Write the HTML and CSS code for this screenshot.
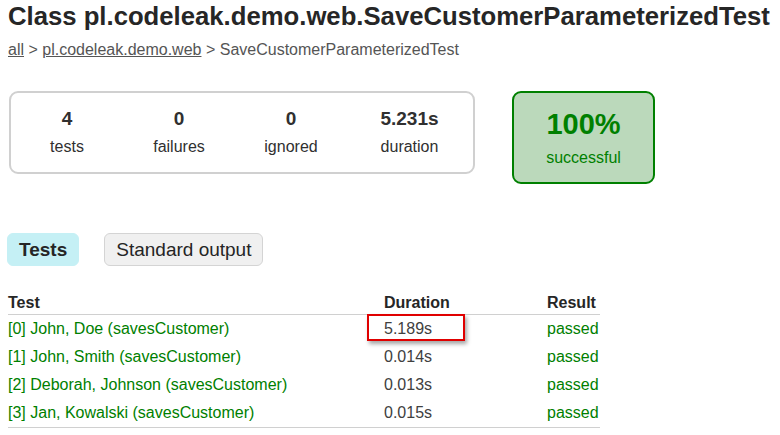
FILE: index.html
```html
<!DOCTYPE html>
<html>
<head>
<meta charset="utf-8">
<link rel="stylesheet" href="styles.css">
</head>
<body>
<div class="content">
  <h1 class="title">Class pl.codeleak.demo.web.SaveCustomerParameterizedTest</h1>
  <div class="breadcrumbs"><a href="#">all</a> &gt; <a href="#">pl.codeleak.demo.web</a> &gt; SaveCustomerParameterizedTest</div>
  <div class="summary">
    <div class="summary-group">
      <div class="info-box"><p class="counter">4</p><p>tests</p></div>
      <div class="info-box"><p class="counter">0</p><p>failures</p></div>
      <div class="info-box"><p class="counter">0</p><p>ignored</p></div>
      <div class="info-box duration"><p class="counter">5.231s</p><p>duration</p></div>
    </div>
    <div class="info-box success-rate"><p class="percent">100%</p><p>successful</p></div>
  </div>
  <ul class="tab-links">
    <li class="tab selected">Tests</li>
    <li class="tab">Standard output</li>
  </ul>
  <table class="tests">
    <thead>
      <tr><th class="c-test">Test</th><th class="c-dur">Duration</th><th class="c-res">Result</th></tr>
    </thead>
    <tbody>
      <tr><td class="success">[0] John, Doe (savesCustomer)</td><td class="dur"><span class="mark"></span>5.189s</td><td class="success">passed</td></tr>
      <tr><td class="success">[1] John, Smith (savesCustomer)</td><td class="dur">0.014s</td><td class="success">passed</td></tr>
      <tr><td class="success">[2] Deborah, Johnson (savesCustomer)</td><td class="dur">0.013s</td><td class="success">passed</td></tr>
      <tr class="last"><td class="success">[3] Jan, Kowalski (savesCustomer)</td><td class="dur">0.015s</td><td class="success">passed</td></tr>
    </tbody>
  </table>
</div>
</body>
</html>
```
FILE: styles.css
```css
html, body {
  margin: 0;
  padding: 0;
  background: #ffffff;
}
body {
  font-family: "Liberation Sans", Arial, sans-serif;
  font-size: 16px;
  color: #303030;
}
.content {
  padding: 2px 8px 0 8px;
}
.title {
  margin: 0;
  font-size: 25.7px;
  line-height: 29px;
  font-weight: bold;
  color: #262626;
}
.breadcrumbs {
  margin-top: 10px;
  font-size: 16px;
  line-height: 18px;
  color: #555555;
}
.breadcrumbs a {
  color: #555555;
  text-decoration: underline;
}
.summary {
  display: flex;
  align-items: flex-start;
  margin-top: 32px;
  margin-left: 1px;
}
.summary-group {
  display: flex;
  border: 2px solid #d0d0d0;
  border-radius: 9px;
  padding: 0 1px 0 0;
}
.info-box {
  width: 112px;
  padding: 15px 0 16px 0;
  text-align: center;
}
.info-box p {
  margin: 0;
  line-height: 18px;
}
.info-box.duration {
  width: 125px;
}
.counter {
  font-size: 19px;
  font-weight: bold;
  line-height: 22px !important;
  margin-bottom: 8px !important;
}
.success-rate {
  width: 139px;
  margin-left: 37px;
  padding-bottom: 15px;
  border: 2px solid #008000;
  border-radius: 9px;
  background: #bbd9bb;
  color: #008000;
}
.percent {
  font-size: 29px;
  font-weight: bold;
  line-height: 33px !important;
  margin-bottom: 8px !important;
}
.tab-links {
  display: flex;
  list-style: none;
  margin: 49px 0 0 -1px;
  padding: 0;
}
.tab {
  font-size: 19px;
  line-height: 21px;
  padding: 5px 11px;
  margin-right: 25px;
  border: 1px solid #d4d4d4;
  border-radius: 6px;
  background: #f0f0f0;
  color: #252525;
}
.tab.selected {
  background: #c5f0f5;
  border-color: #c5f0f5;
  font-weight: bold;
  padding: 5px 11px;
}
.tests {
  border-collapse: collapse;
  margin-top: 24px;
}
.tests th {
  text-align: left;
  font-weight: bold;
  padding: 4px 0 2px 0;
  line-height: 18px;
  border-bottom: 1px solid #d0d0d0;
  color: #262626;
}
.tests td {
  padding: 5px 0;
  line-height: 18px;
}
.c-test { width: 376px; }
.c-dur { width: 163px; }
.c-res { width: 53px; }
.success {
  color: #008000;
}
.dur {
  position: relative;
  color: #404040;
}
.tests tr.last td {
  border-bottom: 1px solid #d0d0d0;
}
.mark {
  position: absolute;
  left: -17px;
  top: -1px;
  width: 94px;
  height: 23px;
  border: 2px solid #e00000;
  box-shadow: 2px 3px 4px rgba(0,0,0,0.35);
}
```
